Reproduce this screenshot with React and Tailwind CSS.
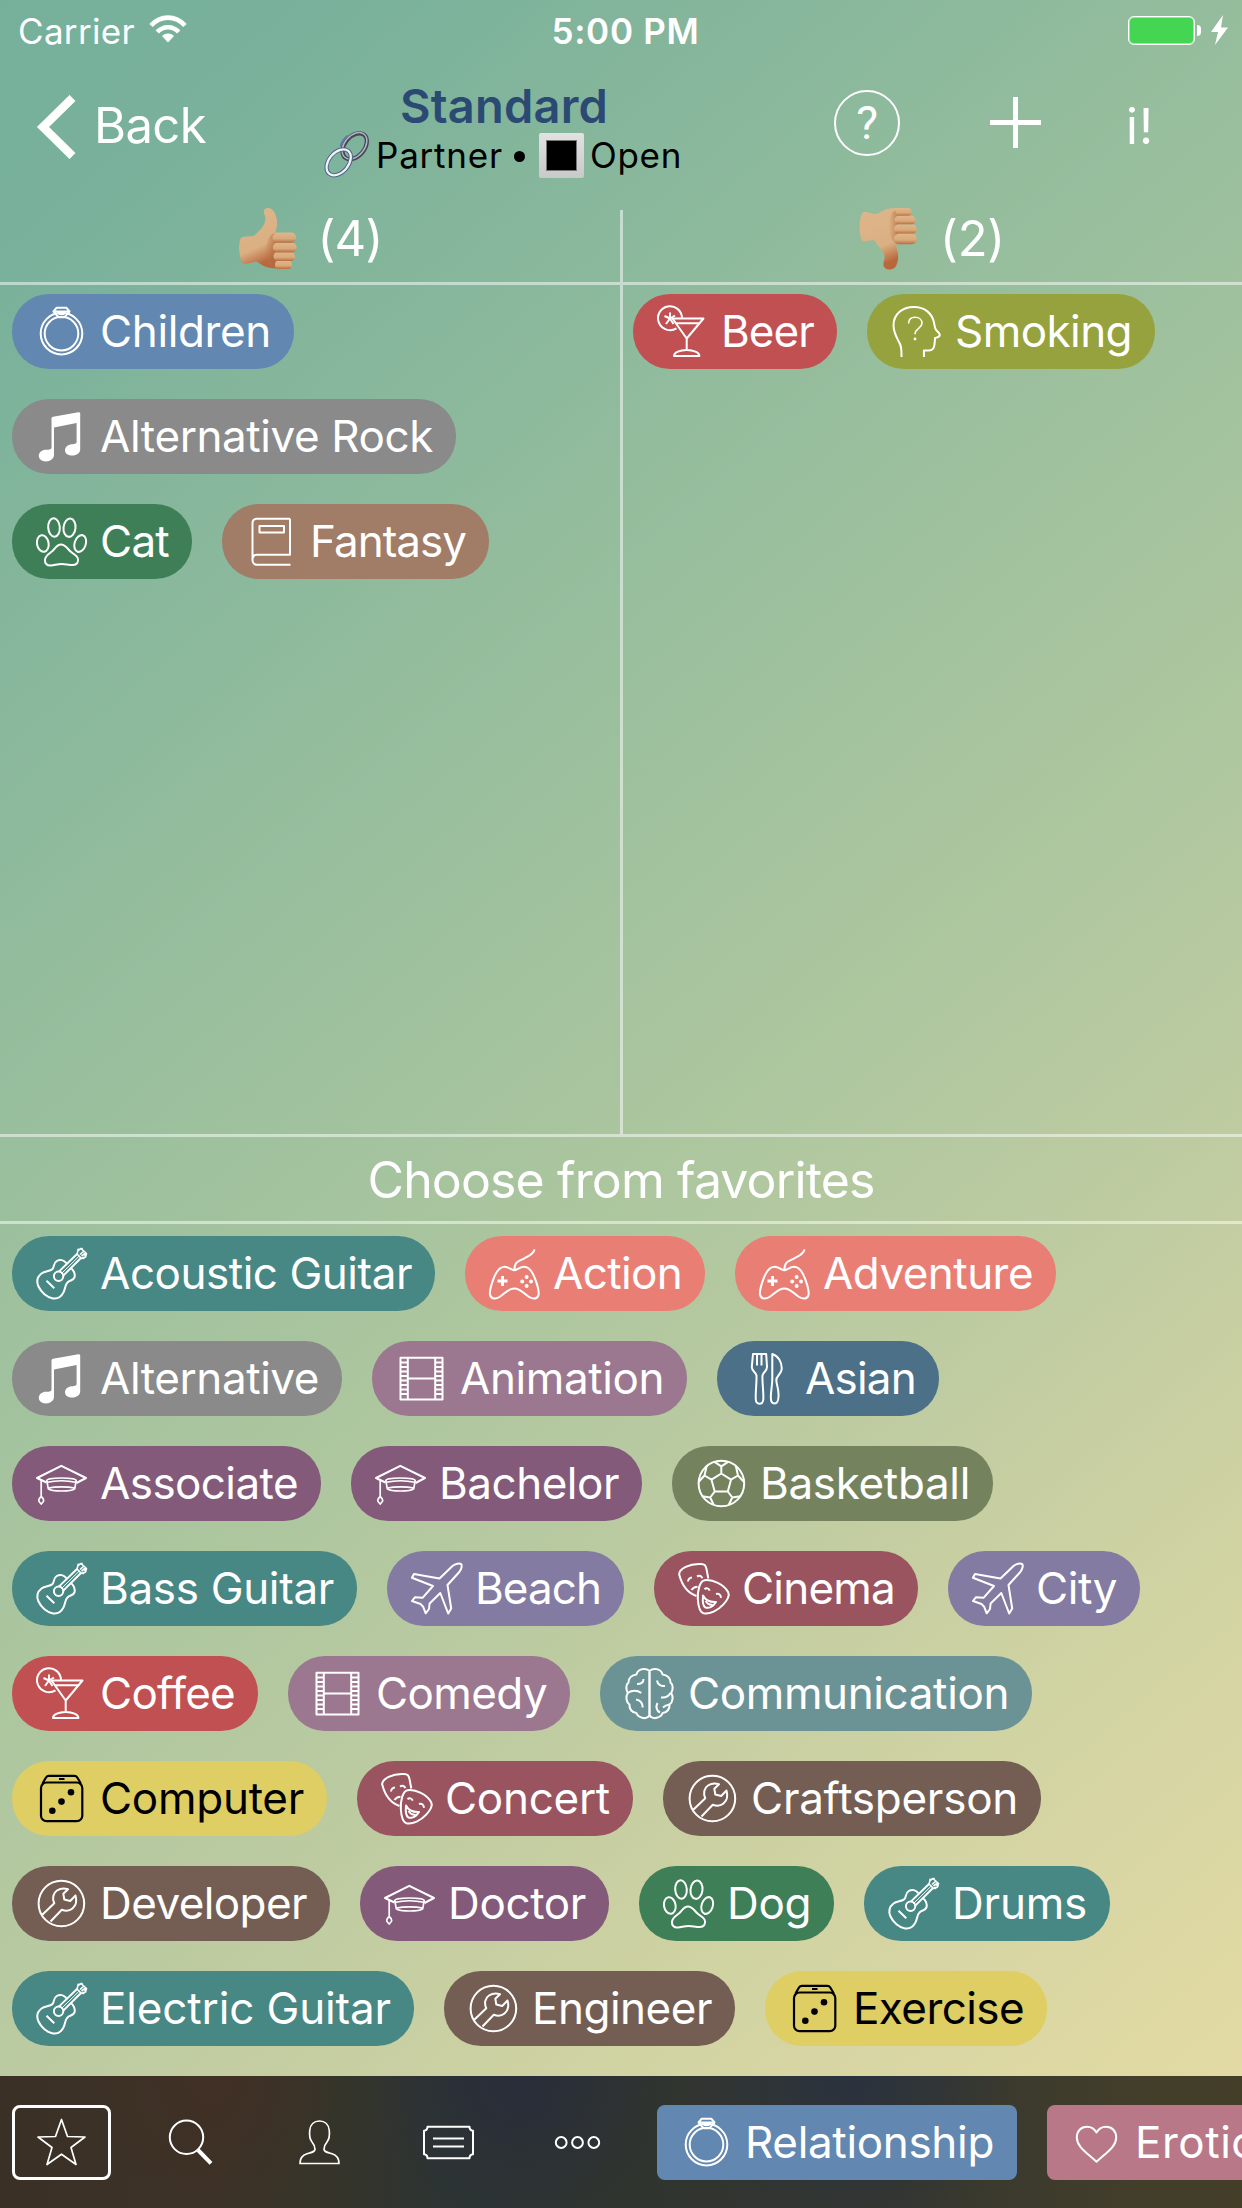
import React, { useLayoutEffect, useRef } from "react";

/* Text that tightens or loosens its letter spacing to fill a given width. */
function FitText({ width, children, className = "" }) {
  const ref = useRef(null);
  useLayoutEffect(() => {
    const el = ref.current;
    if (!el || !width) return;
    el.style.letterSpacing = "0px";
    const natural = el.getBoundingClientRect().width;
    el.style.letterSpacing = `${(width - natural) / children.length}px`;
  }, [width, children]);
  return (
    <span ref={ref} className={`inline-block whitespace-pre ${className}`}>
      {children}
    </span>
  );
}

const icons = {
  ring: (
    <>
      <circle cx="25.5" cy="27.6" r="20.8" />
      <circle cx="25.5" cy="27.6" r="16.8" />
      <path d="M20.5 1.8h10l3 3.7-5 5.7h-6l-5-5.7zM18 5.6h15M23 5.6v3M28 5.6v3M23 8h5" />
    </>
  ),
  music: (
    <path
      fill="currentColor"
      stroke="none"
      d="M15.5 7.6q0-1.5 1.6-1.8L42.4 1.2q1.8-.2 1.800 1.400V38.600c0 3.400-3.600 6-7.800 6s-7.400-2-7.400-5.400 3.300-6 7.600-6q3.400 0 4-1.600V12L18 16.600V44c0 3.600-3.600 6.400-8 6.400s-7.200-2.200-7.200-5.600 3.200-6 7.400-6c3.400 0 5.300-.4 5.300-2z"
    />
  ),
  paw: (
    <>
      <ellipse cx="18" cy="11.5" rx="5.8" ry="9.2" transform="rotate(-4 18 11.5)" />
      <ellipse cx="33.5" cy="11.7" rx="6" ry="9.2" transform="rotate(6 33.5 11.7)" />
      <ellipse cx="6.8" cy="27.5" rx="5.8" ry="8.4" transform="rotate(-10 6.8 27.5)" />
      <ellipse cx="44.2" cy="27.5" rx="5.6" ry="8.6" transform="rotate(18 44.2 27.5)" />
      <path d="M25 28.5C21 28.5 19.5 32 16.5 35 13 38 9.5 39.5 9 43.5c-.5 4 2.5 6.5 6 6 4-.5 7-1.5 10.500-1.500s7.500 1 11.500 1 5.500-3 5-6c-.5-3.500-5-5-8-8S29 28.500 25 28.500z" />
    </>
  ),
  book: (
    <>
      <path d="M44 2.8H10.5a4 4 0 0 0-4 4V44c0 3 2 4.800 4.500 4.800h33.500M6.500 43.500c0-3 2-4.700 4.500-4.700h33v-36" />
      <rect x="13.5" y="10" width="24.5" height="6.6" />
    </>
  ),
  cocktail: (
    <>
      <path d="M25 12A12 12 0 1 0 19.5 22.3" />
      <path d="M13 12.5V6.500M13 12.500l-5.500-2.500M13 12.500L9 18M13 12.500l3.500 5.500M13 12.500l5-3" />
      <path d="M15.500 12.500h31L29.700 32.500zM19.500 17.300h23M29.700 32.500V44M17 50c0-3.500 6-6 12.700-6s12.700 2.500 12.700 6z" />
    </>
  ),
  head: (
    <>
      <path d="M10.500 51c0-5 .3-9-1.500-13C6.500 33 2.500 27 2.500 19.500 2.500 8 11 1 23 1c11 0 18 6.500 20 15.500.6 3 .6 5 1.800 7 1.500 2.500 4 3.500 4 5.500 0 2-2.800 2.500-4.800 3 0 3-.3 5-.6 7-.5 4-2.500 5.500-5.500 5.500h-5V51" />
      <path d="M17.600 17.500c0-4 2.600-6.200 6.600-6.200 4 0 6.800 2.500 6.800 6 0 4.700-7 5-7 11" strokeWidth="1.6" />
      <circle cx="24" cy="33" r="1.4" fill="currentColor" stroke="none" />
    </>
  ),
  guitar: (
    <>
      <path d="M30.300 15.200C28 12 24 11 20.800 13c-4 2.500-2 5.500-4.300 8-2.500 2.500-7.500 2-11 4.500C1 29 .3 33.500 2.500 38.500 5 44 11 49.500 17 50.400c4.500.6 8.500-2 10.500-6 2-3.800 1.300-7.500 4-10 2.500-2.300 6-1.800 7-5 1-3.400-1-7.500-3.700-9.400" />
      <circle cx="22.6" cy="28.3" r="4.7" />
      <path d="M22.800 23.600L41 6M27.300 27.600L45.500 9.500M10.500 32.700l7.800 7.500" />
      <path d="M41 6l1-3.500 3-2 5.500 5-1 3.500-4 1.500zM43 2l-1.500-1M46.500 0L45 1.500M50.500 8.500l-2-1.500M44 6.500l4-3.500M45.500 8l4-3M48 11l-1.500-2" strokeWidth="1.6" />
      <path d="M25 26L43.500 7.800" strokeWidth="1" />
    </>
  ),
  gamepad: (
    <>
      <path d="M25.300 22.300c.3-9 3.700-8.600 10-12 5-2.700 9.500-4.500 10.200-9" />
      <path d="M25.300 22.300c-3.500 0-5-3.600-9.600-3.600-6 0-9 5.800-11.500 13C1.500 39 .5 43 1 46.500c.8 4.800 5.500 4.800 9.500 2.500 5-3 8.500-8.500 14.800-8.500s9.800 5.500 14.800 8.500c4 2.300 8.700 2.300 9.500-2.500.5-3.500-.5-7.500-3.200-14.800-2.500-7.200-5.500-13-11.500-13-4.600 0-6.100 3.600-9.600 3.600z" />
      <path d="M13.500 28v10M8.500 33h10" strokeWidth="3" />
      <g fill="currentColor" stroke="none">
        <circle cx="37.6" cy="29" r="2" />
        <circle cx="37.6" cy="38" r="2" />
        <circle cx="33.2" cy="33.5" r="2" />
        <circle cx="42" cy="33.5" r="2" />
      </g>
    </>
  ),
  film: (
    <>
      <path d="M4.500 4.700h42v41.800h-42zM11.800 4.700v41.800M39.200 4.700v41.800M11.800 25.500h27.400" />
      <path d="M5 9.500h6.500M5 14h6.500M5 18.500h6.500M5 23h6.500M5 27.500h6.500M5 32h6.500M5 36.500h6.500M5 41h6.500M39.500 9.500H46M39.500 14H46M39.500 18.500H46M39.500 23H46M39.500 27.500H46M39.500 32H46M39.500 36.500H46M39.500 41H46" strokeWidth="1.8" />
    </>
  ),
  cap: (
    <>
      <path d="M10.500 24.500L1 20 25.300 7.800 50 20l-9.500 5" />
      <path d="M10.800 22.500c0-1.500 6-2.500 14.700-2.500s14.700 1 14.700 2.500l-1.500 8.300c-2 1.700-7.200 2.200-13.200 2.200s-11.200-.5-13.200-2.200zM11.500 24.300c8-2 20-2 28 0M12.500 30c7-1.600 19-1.600 26 0" strokeWidth="1.7" />
      <path d="M5.200 22v16.500M5.200 38.500c-1.500 1.300-2.500 2.500-2.500 4 0 1.400 1.300 2 2.500 3.500 1.200-1.500 2.500-2.100 2.500-3.500 0-1.500-1-2.700-2.500-4z" strokeWidth="1.7" />
    </>
  ),
  cutlery: (
    <>
      <path d="M12 1h13.200L26 14c0 4.500-4 5-4.500 8.500-.5 7 1.300 17 .8 24-.3 5.500-7.200 5.500-7.500 0-.5-7 1-17 .7-24-.5-3.500-4.700-4-4.700-8.500zM16 1v11.500M20.500 1v11.500" />
      <path d="M31.300 1c6 2 9.500 8 9.500 14.500 0 6-6 7-5.500 12 .4 4.500 2.500 9 2.300 15-.1 4.500-1.300 8-4 8s-3.800-2.500-3.800-6c0-7 1.800-13 1.500-20z" />
    </>
  ),
  ball: (
    <>
      <circle cx="25.4" cy="25.5" r="22.8" />
      <path d="M25.300 15.500l9.700 6.200-3.200 11.800H18.700l-3.200-11.800zM25.300 15.500V8.300M35 21.700l7-4.200M31.800 33.500l4.500 6M18.700 33.500l-4.500 6M15.500 21.700l-7-4.200M18.500 3.800l6.800 4.500 6.800-4.500M42 17.500l-2.200-9.700M42 17.500l6 6.500M8.500 17.500l2.200-9.700M8.500 17.500l-6 6.500M14.200 39.500l-8-1.200M14.200 39.500l3.500 7.300M36.300 39.500l8-1.200M36.300 39.500l-3.500 7.300" />
    </>
  ),
  plane: (
    <path d="M28.500 15.500L41.500 3C44.500.5 48.500.2 50 1s.6 5-1.700 8L36.500 22l3.700 23.500-3 5-7.900-20.500L18.600 40.500 18 46l-3.300 4.300-2.500-6.500L9.500 41 1 38l3-3.800 7.500.6 10.500-11.800L.9 14.700 3 10.900z" />
  ),
  masks: (
    <>
      <path d="M18.500 33C8.500 29.500 3.500 20.500 1.200 11.500.8 6 11.500.3 23 1c3.500.2 4.500 1 5.500 5l1.800 9.500" />
      <path d="M26.500 17.200c8-1.200 19.500 4.300 23.700 12 1.500 3-.5 7.500-5 12.500C40 47.500 31.500 51.500 25.500 50.200c-4-1-5.300-7.700-5.700-14.200-.4-7.500 1.700-17.800 6.700-18.800z" />
      <path d="M10 18.500c.3-3 2-3.800 4-4M19 13.500c2.500-1.300 4.500-.6 5.300 1.800M13.500 27c1.500-2.500 3.500-3.300 6-3.300M26.500 26.300c1.800-1.600 4.200-1.300 5.200 1.300M38 31c2.500-1 4.700.5 5 3.800M25 32.500c2.500 5 7.500 6.800 13 6.500-2.500 4.300-7 6.700-10.500 5.500-3-1.300-3-6.500-2.500-12zM27.500 38c2 3 4.500 4 7 3.700" />
    </>
  ),
  brain: (
    <>
      <path d="M25.500 3.500v44.200" strokeWidth="2.4" />
      <path d="M25.500 3C23.500.5 18 .2 15 2.500c-1.500 1-2.300 2.500-2.600 4C8 7 4.500 10 4.500 14.500 2 16.500 1.500 21 3.800 25 1.500 28.500 2 34 5.500 36.500 5 41 8 44.500 12.400 45c1.600 4.500 9.500 7.500 13.100 2.700C29.100 52.500 37 49.500 38.600 45c4.400-.5 7.400-4 6.900-8.500 3.500-2.500 4-8 1.700-11.500 2.300-4 1.800-8.500-.7-10.500 0-4.500-3.500-7.500-7.900-8-.3-1.500-1.100-3-2.600-4C33 .2 27.500.5 25.500 3z" />
      <path d="M19.500 11c0 3-2.500 5-6.500 5M33 12.500c.5 3.500 3.500 6 8 5.500M3.800 25c4-3 9.500-3 13.500 0M12 31.500c4 .5 6.500 3.500 6.700 8M46.500 25c-2 3.500-5.500 5-9.500 4.500M33.500 35c-2 3.500-1 8 2.500 9.500M45.500 36.500c-3 .5-5 1.500-6.500 3" />
    </>
  ),
  dice: (
    <>
      <rect x="5" y="9.5" width="41.3" height="38.7" rx="5.5" strokeWidth="2.2" />
      <path d="M6.500 10.500L10 4.500q1-1.600 3-1.600h25.300q2 0 3 1.600l3.500 6M23 6h5.500" strokeWidth="2.2" />
      <g fill="currentColor" stroke="none">
        <circle cx="35" cy="19.3" r="3.3" />
        <circle cx="25.5" cy="28.6" r="3.3" />
        <circle cx="16.3" cy="37.7" r="3.3" />
      </g>
    </>
  ),
  wrench: (
    <>
      <circle cx="25.4" cy="25.5" r="22.8" />
      <path d="M6 37l12.300-11.700C16 20.500 17 15 21 12.500c3.500-2.200 7.700-2.200 11-1.300l-4.700 4.500 1 5.800 5.900 1.500 5.300-5.500c1.500 5 .5 10-3 13-3.500 3-7.500 2.500-10.700 1.300L14.500 43.500" />
    </>
  ),
  star: (
    <path d="M25.500 2.500L31.500 19.500 49 20 35 30.500 40 47.500 25.500 37.200 11 47.500 16 30.500 2 20l17.500-.5z" strokeWidth="1.7" />
  ),
  search: (
    <>
      <circle cx="21.5" cy="20.3" r="16.7" />
      <path d="M33 33l13 13.3" strokeWidth="4" />
    </>
  ),
  person: (
    <path d="M6 46.500c0-6.500 3-8.500 7-9.700 5-1.500 8-2 8-4.500 0-3-1-5-3-7.300-2.500-3-2.800-6-2.300-11.500C16.200 7.500 20 4 25.500 4s9.300 3.500 9.800 9.500c.5 5.500.2 8.500-2.300 11.500-2 2.300-3 4.300-3 7.300 0 2.500 3 3 8 4.500 4 1.200 7 3.200 7 9.700z" strokeWidth="1.7" />
  ),
  ticket: (
    <>
      <path d="M4.500 9.800h42c0 2.200 1.200 3.700 3.500 4v23.400c-2.300.3-3.500 1.800-3.500 4h-42c0-2.200-1.200-3.700-3.500-4V13.800c2.300-.3 3.500-1.800 3.500-4z" />
      <path d="M10 21.500h31M10 29.500h31" />
    </>
  ),
  more: (
    <>
      <circle cx="9.2" cy="25.5" r="5.4" />
      <circle cx="25.5" cy="25.5" r="5.4" />
      <circle cx="41.8" cy="25.5" r="5.4" />
    </>
  ),
  heart: (
    <path d="M25.500 15.500C22.500 10.500 19 9.800 16 9.800 10 9.800 5.800 14 5.800 20.500c0 9 9 14.500 19.700 24.300C36.200 35 45.200 29.500 45.200 20.500c0-6.500-4.200-10.700-10.200-10.700-3 0-6.500.7-9.500 5.700z" />
  ),
};

function Icon({ name }) {
  return (
    <svg
      viewBox="0 0 51 51"
      className="h-[51px] w-[51px] shrink-0 overflow-visible"
      fill="none"
      stroke="currentColor"
      strokeWidth="2"
      strokeLinejoin="round"
      strokeLinecap="butt"
    >
      {icons[name]}
    </svg>
  );
}

function Chip({ icon, label, w, bg, shape = "rounded-[37px]", dark = false }) {
  return (
    <div
      className={`flex h-[75px] shrink-0 items-center gap-[13px] pl-6 pr-[23px] text-[44px] leading-[75px] ${shape} ${bg} ${
        dark ? "text-black" : "text-white"
      }`}
    >
      <Icon name={icon} />
      <FitText width={w}>{label}</FitText>
    </div>
  );
}

const teal = { icon: "guitar", bg: "bg-[#478784]" };
const salmon = { icon: "gamepad", bg: "bg-[#e97e75]" };
const grey = { icon: "music", bg: "bg-[#8a8a8a]" };
const mauve = { icon: "film", bg: "bg-[#9b7790]" };
const purple = { icon: "cap", bg: "bg-[#835a79]" };
const violet = { icon: "plane", bg: "bg-[#837ba1]" };
const wine = { icon: "masks", bg: "bg-[#9a5460]" };
const red = { icon: "cocktail", bg: "bg-[#c15052]" };
const yellow = { icon: "dice", bg: "bg-[#dece63]", dark: true };
const brown = { icon: "wrench", bg: "bg-[#745e53]" };
const green = { icon: "paw", bg: "bg-[#3e7f58]" };
const blue = { icon: "ring", bg: "bg-[#6288b1]" };

const liked = [
  [{ ...blue, label: "Children", w: 171 }],
  [{ ...grey, label: "Alternative Rock", w: 333 }],
  [
    { ...green, label: "Cat", w: 69 },
    { icon: "book", bg: "bg-[#a17c67]", label: "Fantasy", w: 156 },
  ],
];

const disliked = [
  [
    { ...red, label: "Beer", w: 93 },
    { icon: "head", bg: "bg-[#96a23d]", label: "Smoking", w: 177 },
  ],
];

const favorites = [
  [
    { ...teal, label: "Acoustic Guitar", w: 312 },
    { ...salmon, label: "Action", w: 129 },
    { ...salmon, label: "Adventure", w: 210 },
  ],
  [
    { ...grey, label: "Alternative", w: 219 },
    { ...mauve, label: "Animation", w: 204 },
    { icon: "cutlery", bg: "bg-[#4c7088]", label: "Asian", w: 111 },
  ],
  [
    { ...purple, label: "Associate", w: 198 },
    { ...purple, label: "Bachelor", w: 180 },
    { icon: "ball", bg: "bg-[#74835e]", label: "Basketball", w: 210 },
  ],
  [
    { ...teal, label: "Bass Guitar", w: 234 },
    { ...violet, label: "Beach", w: 126 },
    { ...wine, label: "Cinema", w: 153 },
    { ...violet, label: "City", w: 81 },
  ],
  [
    { ...red, label: "Coffee", w: 135 },
    { ...mauve, label: "Comedy", w: 171 },
    { icon: "brain", bg: "bg-[#6b9395]", label: "Communication", w: 321 },
  ],
  [
    { ...yellow, label: "Computer", w: 204 },
    { ...wine, label: "Concert", w: 165 },
    { ...brown, label: "Craftsperson", w: 267 },
  ],
  [
    { ...brown, label: "Developer", w: 207 },
    { ...purple, label: "Doctor", w: 138 },
    { ...green, label: "Dog", w: 84 },
    { ...teal, label: "Drums", w: 135 },
  ],
  [
    { ...teal, label: "Electric Guitar", w: 291 },
    { ...brown, label: "Engineer", w: 180 },
    { ...yellow, label: "Exercise", w: 171 },
  ],
];

function ChipRows({ rows }) {
  return (
    <div className="flex flex-col gap-[30px]">
      {rows.map((row, i) => (
        <div key={i} className="flex gap-[30px]">
          {row.map((chip) => (
            <Chip key={chip.label} {...chip} />
          ))}
        </div>
      ))}
    </div>
  );
}

/* Shared skin shading for the two hands. */
function SkinDefs({ id }) {
  return (
    <defs>
      <linearGradient id={`${id}-palm`} x1="0" y1="0" x2=".3" y2="1">
        <stop offset="0" stopColor="#dfb68a" />
        <stop offset=".72" stopColor="#dab083" />
        <stop offset="1" stopColor="#b9683c" />
      </linearGradient>
      <linearGradient id={`${id}-finger`} x1="0" y1="0" x2="0" y2="1">
        <stop offset="0" stopColor="#e0b68a" />
        <stop offset=".6" stopColor="#d9a97a" />
        <stop offset="1" stopColor="#b86c40" />
      </linearGradient>
      <linearGradient id={`${id}-shade`} x1="0" y1="0" x2="1" y2="0">
        <stop offset="0" stopColor="#b9774c" stopOpacity="0" />
        <stop offset="1" stopColor="#b06a3e" stopOpacity=".75" />
      </linearGradient>
    </defs>
  );
}

function ThumbUp() {
  return (
    <svg viewBox="0 0 60 62" className="h-[62px] w-[60px] overflow-visible">
      <SkinDefs id="up" />
      <path
        fill="url(#up-palm)"
        d="M26 2.500C27-1 34-1.500 37 5.500c3 7 2.500 13 0 19.500l4 1v34.500c-6 0-10-.5-14-2-3.500-1.300-6-4-9-5-4.500 1-9 3-13.300 2C1 49 0 37 2.500 30.500c3-3.500 10-1 13.800-3C21 23 27 18 27.500 11c0-4-2.500-5-1.500-8.500z"
      />
      <path fill="url(#up-shade)" d="M30 32c2-4 4-7 8-7v34c-7 0-12-8-12-12 1-6 2-10 4-15z" />
      <rect x="37" y="52.5" width="17" height="8.500" rx="4" fill="url(#up-finger)" />
      <rect x="35.500" y="44" width="21.500" height="9" rx="4.300" fill="url(#up-finger)" />
      <rect x="35" y="34.800" width="23.700" height="9.600" rx="4.500" fill="url(#up-finger)" />
      <rect x="34.500" y="24.600" width="23.500" height="10.200" rx="4.800" fill="url(#up-finger)" />
    </svg>
  );
}

function ThumbDown() {
  return (
    <svg viewBox="0 0 60 62" className="h-[62px] w-[60px] overflow-visible">
      <SkinDefs id="down" />
      <path
        fill="url(#down-palm)"
        d="M2 5.500c2-2.500 4-2 6.500-1 4 1.300 7.500 2 10.500.5C24 1.500 30-.5 38 0l4 36c-5-.5-6.500 1-5.500 4 2 6 2.500 11 0 17-2 5-7 5-10 4-4.500-2-3-7-2-11 .5-4-2-7-5-10.500C17 36.500 15.500 33 13 32c-3.500 0-8 2.500-11 .7-3.500-6.700-3-20.700 0-27.200z"
      />
      <path fill="url(#down-shade)" d="M31 6c2-3 5-4 7-4v34c-5-1-9-8-9-13 0-6 0-12 2-17z" />
      <rect x="35.500" y="0" width="16" height="8" rx="3.800" fill="url(#down-finger)" />
      <rect x="34.500" y="7.800" width="21" height="8.700" rx="4.200" fill="url(#down-finger)" />
      <rect x="34" y="16.500" width="22.800" height="9.300" rx="4.500" fill="url(#down-finger)" />
      <rect x="34" y="25.800" width="22.800" height="10.400" rx="5" fill="url(#down-finger)" />
    </svg>
  );
}

function TallyHeader({ children, count, width }) {
  return (
    <div className={`flex h-[72px] items-center justify-center pb-[14px] ${width}`}>
      <div className="flex w-[145px] items-center justify-between">
        {children}
        <FitText width={65} className="text-[49px] leading-[60px]">
          {count}
        </FitText>
      </div>
    </div>
  );
}

function StatusBar() {
  return (
    <div className="flex h-[60px] items-center justify-between pl-[18px] pr-[14px] text-[35px] leading-[60px]">
      <div className="flex w-[420px] items-center gap-[14px]">
        <FitText width={117} className="pt-px">
          Carrier
        </FitText>
        <svg viewBox="0 0 38 28" className="-mt-[2px] h-[28px] w-[38px]" fill="none" stroke="white" strokeWidth="4.6">
          <path d="M2 10.500C11.500 0 26.500 0 36 10.500M8.300 17c6-6.400 15.400-6.400 21.400 0" />
          <path d="M19 27.500l-6-6.500c3.300-3.300 8.700-3.300 12 0z" fill="white" stroke="none" />
        </svg>
      </div>
      <FitText width={148} className="ml-[5px] pt-px font-semibold">
        5:00 PM
      </FitText>
      <div className="flex w-[420px] items-center justify-end">
        <div className="flex h-[29px] w-[67px] rounded-[6px] border border-white bg-[#a5dfa4] p-px">
          <div className="flex-1 rounded-[4px] bg-[#44d553]" />
        </div>
        <div className="ml-[2px] h-[11px] w-[4px] rounded-r-full bg-white" />
        <svg viewBox="0 0 17 30" className="ml-[10px] h-[30px] w-[17px]" fill="white">
          <path d="M12 0L0 17h7L4 30 17 12.500H10z" />
        </svg>
      </div>
    </div>
  );
}

function LinkEmoji() {
  return (
    <svg viewBox="0 0 46 46" className="h-[46px] w-[46px] shrink-0 overflow-visible" fill="none">
      <g transform="rotate(40 30.7 14.300)">
        <ellipse cx="30.7" cy="14.3" rx="9.800" ry="14.800" stroke="#4a4350" strokeWidth="4.200" />
        <ellipse cx="30.2" cy="14" rx="10" ry="15" stroke="#aab7cb" strokeWidth="1.500" />
      </g>
      <g transform="rotate(40 14.700 30.300)">
        <ellipse cx="14.7" cy="30.3" rx="9.800" ry="14.800" stroke="#4d6487" strokeWidth="4.200" />
        <ellipse cx="14.7" cy="30.3" rx="9.800" ry="14.800" stroke="#f1f2f7" strokeWidth="2.200" />
      </g>
      <path d="M16.500 14.500c1-4 4-8.500 7.500-11" stroke="#5f7aa6" strokeWidth="2" />
    </svg>
  );
}

function NavBar() {
  return (
    <div className="flex h-[150px]">
      <div className="flex w-[324px] items-center gap-[18px] pb-[19px] pl-[36px]">
        <svg viewBox="0 0 40 64" className="mt-[3px] h-[64px] w-[40px]" fill="none" stroke="white" strokeWidth="8.500">
          <path d="M36.500 3L7 32l29.500 29" />
        </svg>
        <FitText width={112} className="pt-px text-[49px] leading-[60px]">
          Back
        </FitText>
      </div>
      <div className="flex w-[360px] flex-col items-center pt-[16px]">
        <FitText width={208} className="text-[47px] font-semibold leading-[60px] text-[#2b4a73]">
          Standard
        </FitText>
        <div className="-mt-[6px] flex h-[50px] w-[360px] items-center text-[35px] text-black">
          <LinkEmoji />
          <FitText width={127} className="ml-[6px]">
            Partner
          </FitText>
          <span className="ml-[11px] mr-[14px] mt-[3px] h-[11px] w-[11px] rounded-full bg-black" />
          <div className="flex h-[45px] w-[45px] items-center justify-center rounded-[2px] bg-linear-to-b from-[#e2e2e2] to-[#c9c9c9]">
            <div className="h-[31px] w-[31px] border border-[#777] bg-black" />
          </div>
          <FitText width={92} className="ml-[6px]">
            Open
          </FitText>
        </div>
      </div>
      <div className="flex flex-1 items-start pl-[150px] pt-[30px]">
        <div className="flex h-[66px] w-[66px] items-center justify-center rounded-full border-[2.5px] border-white font-['Roboto',sans-serif] text-[46px] leading-none">
          ?
        </div>
        <svg viewBox="0 0 51 51" className="ml-[90px] mt-[7px] h-[51px] w-[51px]" stroke="white" strokeWidth="5">
          <path d="M25.500 0v51M0 25.500h51" />
        </svg>
        <FitText width={28} className="ml-[85px] mt-[7px] text-[49px] leading-[60px]">
          i!
        </FitText>
      </div>
    </div>
  );
}

const tools = ["star", "search", "person", "ticket", "more"];

function Toolbar() {
  return (
    <div className="flex h-[132px] gap-[30px] overflow-hidden bg-[radial-gradient(circle_at_520px_0px,#292d3a_0px,transparent_150px),radial-gradient(circle_at_850px_0px,#2a323e_0px,transparent_170px),radial-gradient(circle_at_210px_0px,#402f25_0px,transparent_130px),linear-gradient(90deg,#3b3026_0%,#3c3226_18%,#35342a_27%,#2d3433_36%,#30342f_52%,#35372f_72%,#433e2a_92%,#443e29_100%)] pl-3 pt-[29px]">
      {tools.map((name, i) => (
        <div
          key={name}
          className={`flex h-[75px] w-[99px] shrink-0 items-center justify-center rounded-[8px] ${
            i === 0 ? "border-[3px] border-white" : ""
          }`}
        >
          <Icon name={name} />
        </div>
      ))}
      <Chip {...blue} label="Relationship" w={249} shape="rounded-[8px]" />
      <Chip icon="heart" bg="bg-[#b87887]" label="Erotic" w={122} shape="rounded-[8px]" />
    </div>
  );
}

export default function App() {
  return (
    <div className="flex h-[2208px] w-[1242px] flex-col overflow-hidden bg-[linear-gradient(140deg,#76b09b_0%,#79b19b_9%,#97be9d_34%,#afc79f_55%,#becba1_66%,#d3d4a3_81%,#e3daa4_96%)] font-['Inter',sans-serif] text-white">
      <StatusBar />
      <NavBar />
      <div className="flex h-[924px] flex-col">
        <div className="flex">
          <TallyHeader count="(4)" width="w-[620px]">
            <ThumbUp />
          </TallyHeader>
          <div className="w-[3px] bg-white/50" />
          <TallyHeader count="(2)" width="w-[619px]">
            <ThumbDown />
          </TallyHeader>
        </div>
        <div className="h-[3px] bg-white/50" />
        <div className="flex flex-1">
          <div className="w-[620px] pl-3 pt-[9px]">
            <ChipRows rows={liked} />
          </div>
          <div className="w-[3px] bg-white/50" />
          <div className="flex-1 pl-[10px] pt-[9px]">
            <ChipRows rows={disliked} />
          </div>
        </div>
      </div>
      <div className="flex h-[90px] items-center justify-center border-y-[3px] border-white/50">
        <FitText width={507} className="pt-px text-[50px] leading-[84px]">
          Choose from favorites
        </FitText>
      </div>
      <div className="h-[852px] pl-3 pt-3">
        <ChipRows rows={favorites} />
      </div>
      <Toolbar />
    </div>
  );
}
